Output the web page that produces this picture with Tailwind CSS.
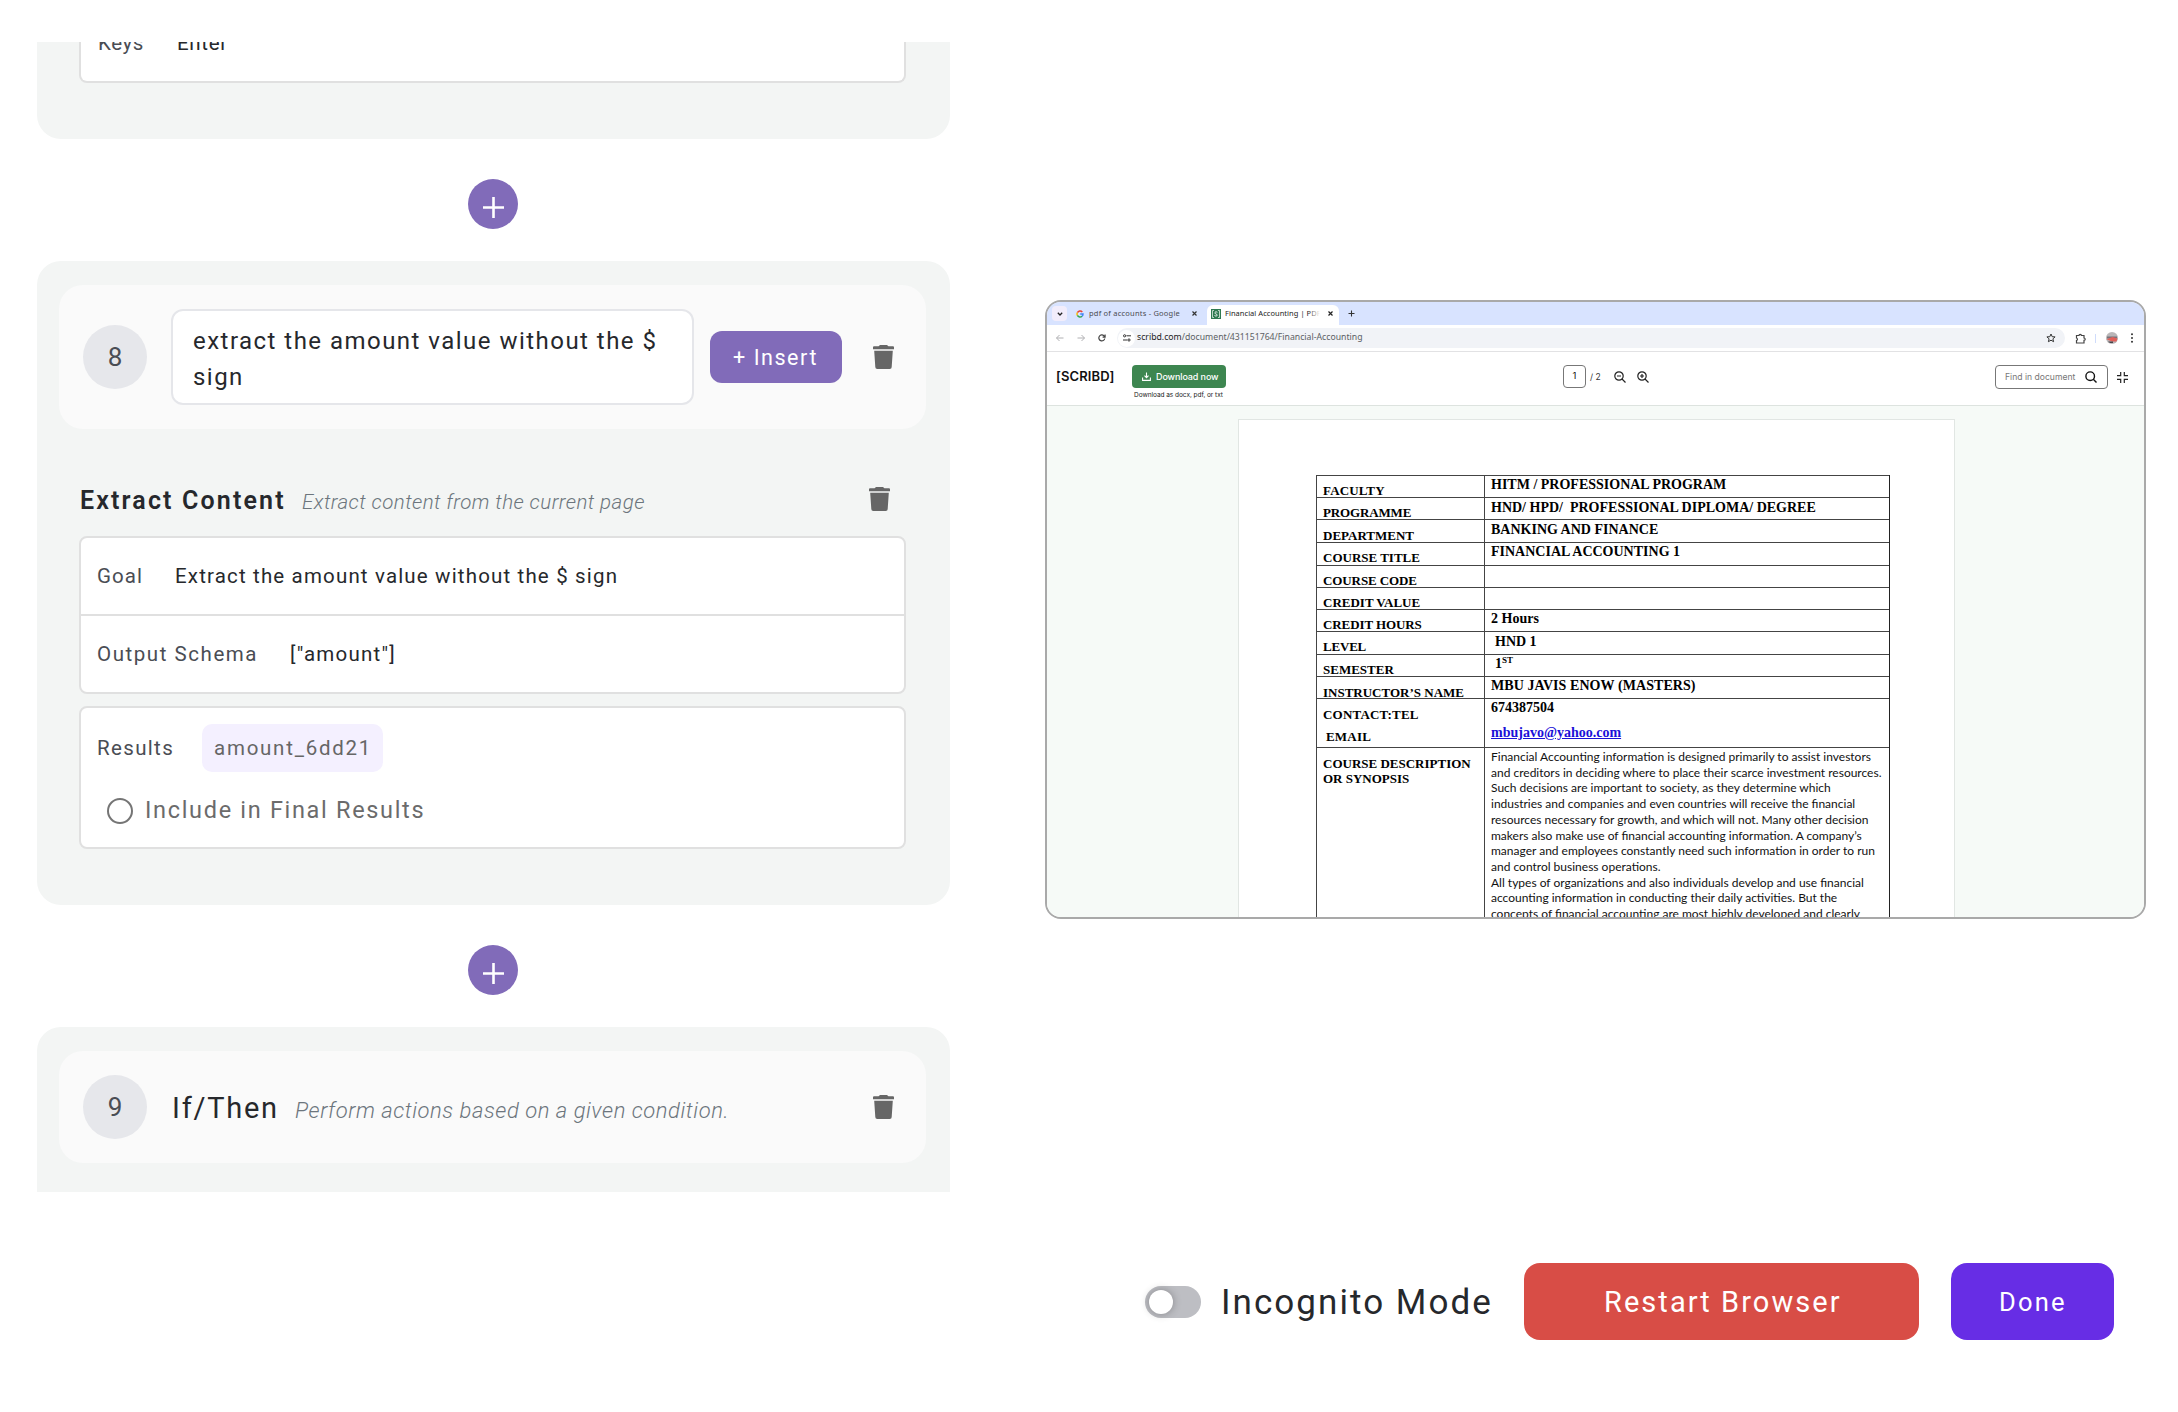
<!DOCTYPE html>
<html lang="en">
<head>
<meta charset="utf-8">
<title>Workflow editor</title>
<script src="https://cdn.jsdelivr.net/npm/@tailwindcss/browser@4"></script>
</head>
<body class="flex h-[1412px] w-[2178px] overflow-hidden bg-white font-['Roboto',sans-serif] text-[#26282c]">
<svg class="hidden">
  <symbol id="trash" viewBox="0 0 21 24"><path d="M7 0h7l1.400 1.200h4.600a1 1 0 0 1 1 1V4.200H0V2.200a1 1 0 0 1 1-1h4.600z"/><path d="M1.200 5.800h18.600l-1.100 16.200a2 2 0 0 1-2 2H4.300a2 2 0 0 1-2-2z"/></symbol>
  <symbol id="plus" viewBox="0 0 21 21"><path d="M10.500 0v21M0 10.500h21" stroke="#fff" stroke-width="2.600"/></symbol>
</svg>

<!-- Steps -->
<section class="ml-[37px] mt-[42px] flex h-[1150px] w-[913px] shrink-0 flex-col overflow-hidden">
  <div class="-mt-[37px] h-[134px] shrink-0 rounded-b-3xl bg-[#f3f5f4] px-[42px] pr-[44px]">
    <div class="flex h-[78px] items-center rounded-b-lg border-2 border-t-0 border-[#e0e0e0] bg-white px-[17px] pt-[1px] text-[20.5px]">
      <span class="w-[79px] whitespace-nowrap font-[450] tracking-[0.55px] text-[#4a4d54]">Keys</span>
      <span class="tracking-[0.7px]">Enter</span>
    </div>
  </div>

  <div class="my-[40px] ml-[431px] flex size-[50px] shrink-0 justify-center rounded-full bg-[#816bb9] pt-[18px]"><svg class="size-[21px]"><use href="#plus"/></svg></div>
  <div class="-mt-[8px] h-[644px] shrink-0 rounded-3xl bg-[#f3f5f4] pt-[24px]">
    <div class="ml-[22px] flex h-[144px] w-[867px] items-center rounded-3xl bg-[#fafafa] pl-[24px]">
      <div class="flex size-[64px] items-center justify-center rounded-full bg-[#e6e7eb] text-[26px] font-[450] text-[#4a4d54]">8</div>
      <div class="ml-[24px] h-[96px] w-[523px] whitespace-nowrap rounded-xl border-2 border-[#e5e6ea] bg-white pl-[20px] pt-[12px] text-2xl leading-[36px] tracking-[1.47px]">extract the amount value without the $<br>sign</div>
      <div class="ml-[16px] flex h-[52px] w-[132px] items-center whitespace-nowrap rounded-xl bg-[#816bb9] pl-[23px] pt-[3px] text-[21.5px] font-[450] tracking-[1.55px] text-white">+ Insert</div>
      <svg class="ml-[31px] h-[24px] w-[21px] fill-[#666]"><use href="#trash"/></svg>
    </div>
    <div class="mt-[58px] flex h-[24px] items-center pl-[43px] pr-[60px]">
      <span class="w-[222px] whitespace-nowrap pt-[4px] text-[25px] font-semibold tracking-[2.15px]">Extract Content</span>
      <span class="whitespace-nowrap pt-[6px] text-[20.5px] font-light italic tracking-[0.44px] text-[#6c757d]">Extract content from the current page</span>
      <svg class="ml-auto h-[24px] w-[21px] fill-[#666]"><use href="#trash"/></svg>
    </div>
    <div class="ml-[42px] mt-[25px] h-[158px] w-[827px] divide-y-2 divide-[#e0e0e0] whitespace-nowrap rounded-lg border-2 border-[#e0e0e0] bg-white text-[20.5px]">
      <div class="flex h-[78px] items-center pl-[16px]">
        <span class="w-[78px] font-[450] tracking-[1.1px] text-[#4a4d54]">Goal</span><span class="tracking-[1.16px]">Extract the amount value without the $ sign</span>
      </div>
      <div class="flex h-[76px] items-center pl-[16px]">
        <span class="w-[193px] font-[450] tracking-[1.55px] text-[#4a4d54]">Output Schema</span><span class="tracking-[1.23px]">["amount"]</span>
      </div>
    </div>
    <div class="ml-[42px] mt-[12px] h-[143px] w-[827px] whitespace-nowrap rounded-lg border-2 border-[#e0e0e0] bg-white pl-[16px] pt-[16px]">
      <div class="flex h-[48px] items-center text-[20.5px] font-[450] text-[#4a4d54]">
        <span class="w-[105px] tracking-[1.35px]">Results</span>
        <div class="flex h-[48px] w-[181px] items-center rounded-[10px] bg-[#f4f0ff] pl-[12px] tracking-[1.75px] text-[#666]">amount_6dd21</div>
      </div>
      <div class="mt-[26px] flex h-[26px] items-center pl-[10px] text-[23.5px] font-[450] text-[#6b6b6b]">
        <div class="mr-[12px] size-[26px] rounded-full border-2 border-[#757575]"></div>
        <span class="tracking-[1.68px]">Include in Final Results</span>
      </div>
    </div>
  </div>

  <div class="my-[40px] ml-[431px] flex size-[50px] shrink-0 justify-center rounded-full bg-[#816bb9] pt-[18px]"><svg class="size-[21px]"><use href="#plus"/></svg></div>
  <div class="-mt-[8px] h-[300px] shrink-0 rounded-3xl bg-[#f3f5f4] pt-[24px]">
    <div class="ml-[22px] flex h-[112px] w-[867px] items-center whitespace-nowrap rounded-3xl bg-[#fafafa] pl-[24px]">
      <div class="flex size-[64px] items-center justify-center rounded-full bg-[#e6e7eb] text-[26px] font-[450] text-[#4a4d54]">9</div>
      <span class="ml-[25px] w-[123px] pt-[3px] text-[29px] font-[450] tracking-[1.75px]">If/Then</span>
      <span class="pt-[7px] text-[22px] font-light italic tracking-[0.55px] text-[#6c757d]">Perform actions based on a given condition.</span>
      <svg class="ml-auto mr-[32px] h-[24px] w-[21px] fill-[#666]"><use href="#trash"/></svg>
    </div>
  </div>
</section>

<div class="ml-[95px] flex w-[1101px] shrink-0 flex-col pt-[300px]">
  <!-- Remote browser view -->
  <div class="flex h-[619px] flex-col overflow-hidden whitespace-nowrap rounded-2xl border-2 border-[#a9a9a9] bg-white font-['Noto_Sans',sans-serif]">
    <div class="flex h-[23px] shrink-0 items-center bg-[#d8e3ff] pl-[5px] text-[7.5px] text-[#4b4b50]">
      <div class="flex h-[15px] w-[15px] items-center justify-center rounded-[4px] bg-[#f2edfb]"><svg class="size-[6px]" viewBox="0 0 6 6" fill="none" stroke="#222" stroke-width="1.300"><path d="M.8 1.800L3 4l2.200-2.200"/></svg></div>
      <svg class="ml-[9px] size-[8px]" viewBox="0 0 8 8" fill="none" stroke-width="1.500"><path d="M6.300 1.900A3 3 0 0 0 1.400 2.600" stroke="#ea4335"/><path d="M1.400 2.600a3 3 0 0 0 0 2.800" stroke="#fbbc05"/><path d="M1.400 5.400a3 3 0 0 0 4.700.8" stroke="#34a853"/><path d="M6.100 6.200A3 3 0 0 0 7 4H4.200" stroke="#4285f4"/></svg>
      <span class="ml-[5px] w-[103px] tracking-[0.21px]">pdf of accounts - Google</span>
      <svg class="size-[5px]" viewBox="0 0 5 5" stroke="#333" stroke-width="1.200"><path d="M.5.5l4 4m0-4l-4 4"/></svg>
      <div class="ml-[10px] mt-[3px] flex h-[20px] w-[132px] items-center rounded-t-[6px] bg-white pb-[3px] pl-[4px] text-[#222]">
        <svg class="size-[10px]" viewBox="0 0 10 10"><rect width="10" height="10" fill="#2f7a52"/><path d="M3 1.500H1.500v7H3M7 1.500h1.500v7H7" fill="none" stroke="#dfeee4" stroke-width=".8"/><path d="M6.400 3.300C5 2.400 3.600 3 4 4.200s2.400.8 2.200 2-1.800 1-2.700.3" fill="none" stroke="#fff" stroke-width=".9"/></svg>
        <span class="relative ml-[4px] w-[95px] overflow-hidden tracking-[0.04px]">Financial Accounting | PDF<span class="absolute inset-y-0 right-0 w-[12px] bg-linear-to-r from-white/0 to-white"></span></span>
        <svg class="ml-[8px] size-[5px]" viewBox="0 0 5 5" stroke="#222" stroke-width="1.200"><path d="M.5.5l4 4m0-4l-4 4"/></svg>
      </div>
      <svg class="ml-[9px] size-[7px]" viewBox="0 0 7 7" stroke="#333" stroke-width="1.100"><path d="M3.500.5v6m-3-3h6"/></svg>
    </div>
    <div class="flex h-[27px] shrink-0 items-center border-b border-[#e2e2e4] pl-[9px] text-[8.7px]">
      <svg class="size-[8px]" viewBox="0 0 8 8" fill="none" stroke="#b0b0b3" stroke-width="1"><path d="M7.500 4h-7M3.500 1l-3 3 3 3"/></svg>
      <svg class="ml-[13px] size-[8px]" viewBox="0 0 8 8" fill="none" stroke="#b0b0b3" stroke-width="1"><path d="M.5 4h7M4.500 1l3 3-3 3"/></svg>
      <svg class="ml-[13px] size-[8px]" viewBox="0 0 8 8" fill="none" stroke="#444" stroke-width="1.200"><path d="M6.800 4.500A3 3 0 1 1 6 1.800L7 2.800M7.100.4v2.700H4.600"/></svg>
      <div class="ml-[11px] flex h-[20px] w-[948px] items-center rounded-full bg-[#f1f3f7] pl-[1px]">
        <div class="flex size-[17px] items-center justify-center rounded-full bg-white"><svg class="size-[8px]" viewBox="0 0 8 8" fill="none" stroke="#333" stroke-width="1"><path d="M3.500 1.800H8M0 6h4.200"/><circle cx="1.600" cy="1.800" r="1.100"/><circle cx="6" cy="6" r="1.100"/></svg></div>
        <span class="ml-[2px] text-[#5c5f64]"><span class="text-[#222]">scribd.com</span>/document/431151764/Financial-Accounting</span>
        <svg class="ml-auto mr-[9px] size-[10px]" viewBox="0 0 10 10" fill="none" stroke="#333" stroke-width="1"><path d="M5 1l1.200 2.700 2.900.2-2.200 1.900.7 2.900L5 7.200 2.400 8.700l.7-2.900L.9 3.900l2.900-.2z"/></svg>
      </div>
      <svg class="ml-[10px] size-[11px]" viewBox="0 0 11 11" fill="none" stroke="#444" stroke-width="1.200"><path d="M1.500 2.500H4a1.200 1.200 0 0 1 2.400 0H9V5a1.200 1.200 0 0 1 0 2.400V10H1.500V7.500a1.300 1.300 0 0 0 0-2.500z"/></svg>
      <div class="ml-[9px] h-[9px] w-px bg-[#cfdcfb]"></div>
      <svg class="ml-[10px] size-[12px]" viewBox="0 0 12 12"><circle cx="6" cy="6" r="6" fill="#b9b6b8"/><path d="M1 4.500h10v2H1z" fill="#77727a"/><path d="M.5 7.200l6-2.200 5 1.500-1 3H6z" fill="#e0605a"/><path d="M2 9.500h5v1.500H4z" fill="#4a4448"/></svg>
      <svg class="ml-[12px] h-[10px] w-[4px] fill-[#333]" viewBox="0 0 4 10"><circle cx="2" cy="1.200" r="1"/><circle cx="2" cy="5" r="1"/><circle cx="2" cy="8.800" r="1"/></svg>
    </div>
    <div class="flex h-[54px] shrink-0 border-b border-[#dde3df] pl-[9px] pt-[13px] font-['Inter',sans-serif]">
      <div class="h-[23px] w-[76px] text-[13px] font-semibold leading-[23px] tracking-[0.1px] text-[#111]">[SCRIBD]</div>
      <div class="w-[94px]">
        <div class="flex h-[23px] w-[94px] items-center rounded-[4px] bg-[#3d8650] pl-[10px] text-[9px] font-medium tracking-[-0.1px] text-white">
          <svg class="mr-[5px] size-[9px]" viewBox="0 0 9 9" fill="none" stroke="#fff" stroke-width="1.100"><path d="M4.500.5v5M2.500 3.600l2 2 2-2M.6 5.500v2.900h7.800V5.500"/></svg>
          Download now
        </div>
        <div class="pl-[2px] pt-[2px] text-[6.5px] leading-[10px] tracking-[-0.04px] text-[#222]">Download as docx, pdf, or txt</div>
      </div>
      <div class="ml-[337px] flex h-[23px] w-[23px] items-center justify-center rounded-[4px] border border-[#777] text-[9.5px] text-[#111]">1</div>
      <span class="ml-[4px] w-[24px] text-[8.5px] leading-[24px] text-[#333]">/ 2</span>
      <svg class="mt-[6px] size-[12px]" viewBox="0 0 12 12" fill="none" stroke="#222" stroke-width="1.200"><circle cx="5" cy="5" r="4.200"/><path d="M8 8l3.500 3.500M3 5h4"/></svg>
      <svg class="ml-[11px] mt-[6px] size-[12px]" viewBox="0 0 12 12" fill="none" stroke="#222" stroke-width="1.200"><circle cx="5" cy="5" r="4.200"/><path d="M8 8l3.500 3.500M3 5h4M5 3v4"/></svg>
      <div class="ml-auto flex h-[24px] w-[113px] items-center rounded-[4px] border border-[#777] pl-[9px] text-[8.6px] text-[#777]"><span class="w-[80px]">Find in document</span><svg class="size-[12px]" viewBox="0 0 12 12" fill="none" stroke="#111" stroke-width="1.400"><circle cx="5.200" cy="5.200" r="4.300"/><path d="M8.300 8.300l3.200 3.200"/></svg></div>
      <svg class="ml-[9px] mr-[16px] mt-[7px] size-[11px]" viewBox="0 0 11 11" fill="none" stroke="#222" stroke-width="1.200"><path d="M3.700 0v3.700H0M7.300 0v3.700H11M3.700 11V7.300H0M7.300 11V7.300H11"/></svg>
    </div>
    <div class="flex-1 bg-[#f6faf7] pl-[191px] pt-[13px]">
      <div class="h-[500px] w-[717px] border border-[#e1e6e3] bg-white pl-[77px] pt-[55px] font-['Liberation_Serif',serif] text-[14px] font-bold leading-[14px] text-black">
        <div class="w-[574px] border-r-[1.5px] border-[#222]">
          <div class="flex h-[22px] border-l border-t border-[#444]"><div class="w-[168px] border-r border-[#444] pl-[6px] pt-[8px] text-[13px] leading-[14px] tracking-[0.15px]">FACULTY</div><div class="pl-[6px] pt-[2px]">HITM / PROFESSIONAL PROGRAM</div></div>
          <div class="flex h-[22px] border-l border-t border-[#444]"><div class="w-[168px] border-r border-[#444] pl-[6px] pt-[8px] text-[13px] leading-[14px] tracking-[-0.15px]">PROGRAMME</div><div class="pl-[6px] pt-[3px]">HND/ HPD/&nbsp; PROFESSIONAL DIPLOMA/ DEGREE</div></div>
          <div class="flex h-[23px] border-l border-t border-[#444]"><div class="w-[168px] border-r border-[#444] pl-[6px] pt-[9px] text-[13px] leading-[14px]">DEPARTMENT</div><div class="pl-[6px] pt-[3px]">BANKING AND FINANCE</div></div>
          <div class="flex h-[23px] border-l border-t border-[#444]"><div class="w-[168px] border-r border-[#444] pl-[6px] pt-[8px] text-[13px] leading-[14px]">COURSE TITLE</div><div class="pl-[6px] pt-[2px]">FINANCIAL ACCOUNTING 1</div></div>
          <div class="flex h-[22px] border-l border-t border-[#444]"><div class="w-[168px] border-r border-[#444] pl-[6px] pt-[8px] text-[13px] leading-[14px] tracking-[-0.1px]">COURSE CODE</div></div>
          <div class="flex h-[22px] border-l border-t border-[#444]"><div class="w-[168px] border-r border-[#444] pl-[6px] pt-[8px] text-[13px] leading-[14px]">CREDIT VALUE</div></div>
          <div class="flex h-[22px] border-l border-t border-[#444]"><div class="w-[168px] border-r border-[#444] pl-[6px] pt-[8px] text-[13px] leading-[14px] tracking-[-0.1px]">CREDIT HOURS</div><div class="pl-[6px] pt-[2px]">2 Hours</div></div>
          <div class="flex h-[23px] border-l border-t border-[#444]"><div class="w-[168px] border-r border-[#444] pl-[6px] pt-[8px] text-[13px] leading-[14px] tracking-[-0.2px]">LEVEL</div><div class="pl-[10px] pt-[3px]">HND 1</div></div>
          <div class="flex h-[22px] border-l border-t border-[#444]"><div class="w-[168px] border-r border-[#444] pl-[6px] pt-[8px] text-[13px] leading-[14px]">SEMESTER</div><div class="flex pl-[10px] pt-[2px]">1<span class="-mt-[4px] text-[9px]">ST</span></div></div>
          <div class="flex h-[22px] border-l border-t border-[#444]"><div class="w-[168px] border-r border-[#444] pl-[6px] pt-[9px] text-[13px] leading-[14px]">INSTRUCTOR’S NAME</div><div class="pl-[6px] pt-[2px] tracking-[0.07px]">MBU JAVIS ENOW (MASTERS)</div></div>
          <div class="flex h-[49px] border-l border-t border-[#444]"><div class="w-[168px] border-r border-[#444] pl-[6px] pt-[9px] text-[13px] leading-[14px] tracking-[0.2px]">CONTACT:TEL<div class="pl-[3px] pt-[8px]">EMAIL</div></div><div class="pl-[6px] pt-[2px]">674387504<div class="pt-[11px] text-[#1a10d8] underline">mbujavo@yahoo.com</div></div></div>
          <div class="flex h-[180px] border-l border-t border-[#444]">
            <div class="w-[168px] border-r border-[#444] pl-[6px] pt-[8px] text-[13px] leading-[15px]">COURSE DESCRIPTION<br>OR SYNOPSIS</div>
            <div class="pl-[6px] pt-[1px] font-['Lato',sans-serif] text-[12px] font-normal leading-[15.7px] text-[#111]">
              Financial Accounting information is designed primarily to assist investors<br>
              and creditors in deciding where to place their scarce investment resources.<br>
              Such decisions are important to society, as they determine which<br>
              industries and companies and even countries will receive the financial<br>
              resources necessary for growth, and which will not. Many other decision<br>
              makers also make use of financial accounting information. A company’s<br>
              manager and employees constantly need such information in order to run<br>
              and control business operations.<br>
              All types of organizations and also individuals develop and use financial<br>
              accounting information in conducting their daily activities. But the<br>
              concepts of financial accounting are most highly developed and clearly
            </div>
          </div>
        </div>
      </div>
    </div>
  </div>

  <!-- Session controls -->
  <div class="mt-[344px] flex h-[77px] items-center whitespace-nowrap pl-[100px]">
    <div class="flex h-[32px] w-[56px] items-center rounded-full bg-[#bdbec3] pl-[4px]"><div class="size-[24px] rounded-full bg-white shadow-[0_0_8px_rgba(0,0,0,0.3)]"></div></div>
    <span class="ml-[20px] w-[303px] pt-[2px] text-[35px] leading-none tracking-[2.05px]">Incognito Mode</span>
    <div class="flex h-[77px] w-[395px] items-center rounded-2xl bg-[#d84d46] pl-[80px] pt-[3px] text-[29px] font-[450] tracking-[2.05px] text-white">Restart Browser</div>
    <div class="ml-[32px] flex h-[77px] w-[163px] items-center rounded-2xl bg-[#672de5] pl-[48px] pt-[2px] text-[25.5px] font-[450] tracking-[2.2px] text-white">Done</div>
  </div>
</div>
</body>
</html>
